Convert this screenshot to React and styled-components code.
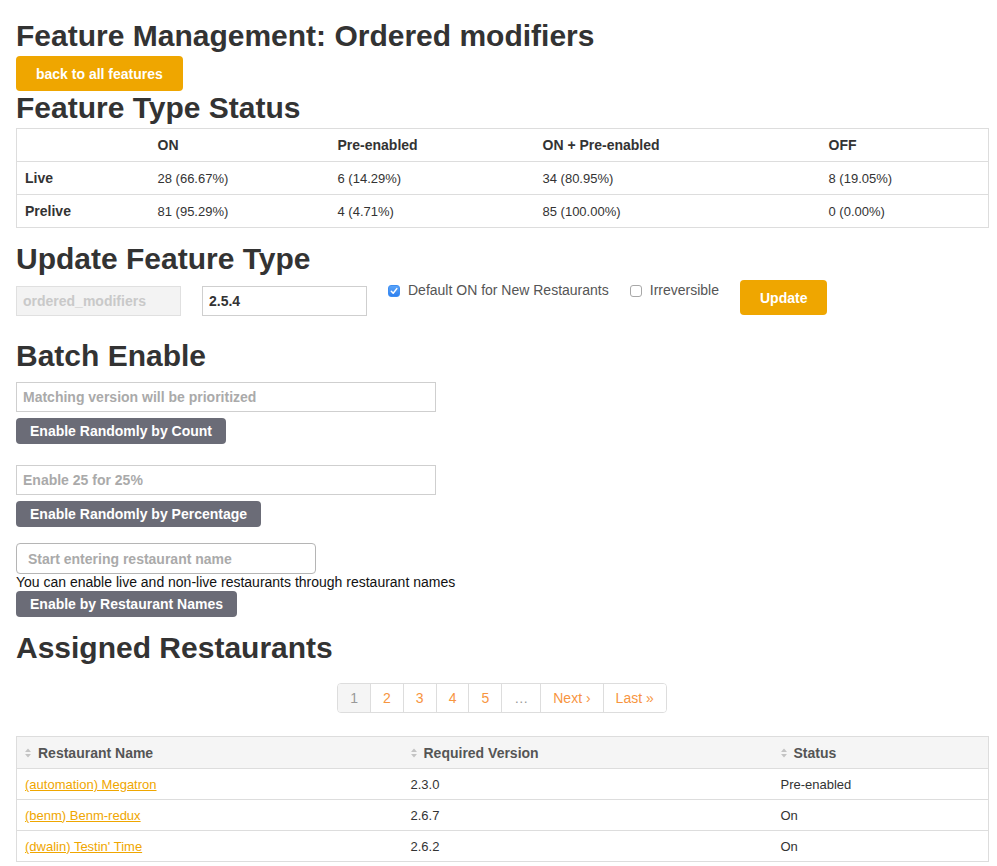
import React from "react";
import styled, { createGlobalStyle } from "styled-components";

const Global = createGlobalStyle`
  html, body { margin: 0; padding: 0; background: #fff; }
  body { font-family: "Liberation Sans", Arial, Helvetica, sans-serif; color: #333; }
  * { box-sizing: border-box; }
`;

const ORANGE = "#efa600";
const SLATE = "#6b6c77";

const Page = styled.div`
  width: 988px;
  padding: 19px 0 0 16px;
`;

const Title = styled.h1`
  margin: 0;
  font-size: 30px;
  line-height: 33px;
  font-weight: bold;
  color: #333;
`;

const Heading = styled.h2`
  margin: ${p => p.$top || 0}px 0 0;
  font-size: 30px;
  line-height: 33px;
  font-weight: bold;
  color: #333;
`;

const PrimaryButton = styled.button`
  display: inline-flex;
  align-items: center;
  justify-content: center;
  height: 35px;
  padding: 0 20px;
  margin-top: ${p => p.$top || 0}px;
  border: none;
  border-radius: 4px;
  background: ${ORANGE};
  color: #fff;
  font-family: inherit;
  font-weight: bold;
  font-size: 14px;
  cursor: pointer;
`;

const SlateButton = styled.button`
  display: flex;
  align-items: center;
  height: 26px;
  padding: 0 14px;
  margin-top: ${p => p.$top || 0}px;
  border: none;
  border-radius: 4px;
  background: ${SLATE};
  color: #fff;
  font-family: inherit;
  font-weight: bold;
  font-size: 14px;
`;

const Table = styled.table`
  width: 972px;
  margin-top: ${p => p.$top || 0}px;
  border-collapse: collapse;
  table-layout: fixed;
  border: 1px solid #ddd;
`;

const HeadRow = styled.tr`
  height: ${p => p.$h}px;
  background: ${p => p.$shade ? "#f5f5f5" : "#fff"};
`;

const Row = styled.tr`
  height: ${p => p.$h}px;
  border-top: 1px solid #ddd;
`;

const Th = styled.th`
  padding: 0 8px;
  text-align: left;
  vertical-align: middle;
  font-size: 14px;
  font-weight: bold;
  color: ${p => p.$muted ? "#555" : "#333"};
  white-space: nowrap;
`;

const Td = styled.td`
  padding: 0 8px;
  text-align: left;
  vertical-align: middle;
  font-size: 13px;
  color: #333;
  white-space: nowrap;
`;

const SortHead = styled.span`
  display: inline-flex;
  align-items: center;
  gap: 7px;
`;

const Link = styled.a`
  color: ${ORANGE};
  text-decoration: underline;
  font-size: 13px;
`;

const FormRow = styled.div`
  display: flex;
  align-items: flex-start;
  gap: 21px;
  margin-top: 5px;
  height: 35px;
`;

const TextInput = styled.input`
  display: block;
  width: ${p => p.$w}px;
  height: ${p => p.$h || 30}px;
  margin-top: ${p => p.$top || 0}px;
  padding: 0 ${p => p.$pad || 6}px;
  border: 1px solid ${p => p.$strong ? "#b5b5b5" : "#cfcfcf"};
  border-radius: ${p => p.$round ? 4 : 0}px;
  background: #fff;
  font-family: inherit;
  font-size: 14px;
  font-weight: bold;
  color: #333;
  outline: none;
  &::placeholder { color: #aaa; }
  &:disabled {
    background: #f3f3f3;
    border-color: #e0e0e0;
    color: #c9c9c9;
  }
`;

const CheckLabel = styled.label`
  display: flex;
  align-items: center;
  gap: 8px;
  margin-top: 2px;
  font-size: 14px;
  line-height: 17px;
  color: #555;
`;

const Box = styled.span`
  display: inline-flex;
  align-items: center;
  justify-content: center;
  width: 12px;
  height: 12px;
  border-radius: 3px;
  border: 1px solid ${p => p.$on ? "#3d8ef3" : "#a8a8a8"};
  background: ${p => p.$on ? "linear-gradient(#5aa3f8, #2f80ef)" : "#fff"};
`;

const Help = styled.div`
  font-size: 14px;
  line-height: 17px;
  color: #111;
`;

const Pager = styled.nav`
  display: flex;
  justify-content: center;
  margin-top: 19px;
`;

const PagerList = styled.div`
  display: inline-flex;
  border: 1px solid #ddd;
  border-radius: 4px;
  overflow: hidden;
`;

const PageItem = styled.span`
  height: 28px;
  line-height: 28px;
  padding: 0 12px;
  font-size: 14px;
  color: ${p => (p.$active || p.$muted) ? "#999" : "#f7953f"};
  background: ${p => p.$active ? "#f5f5f5" : "#fff"};
  & + & { border-left: 1px solid #ddd; }
`;

const SortIcon = () => (
  <svg width="6" height="10" viewBox="0 0 6 10" aria-hidden="true">
    <path d="M0 4 L3 0.5 L6 4 Z" fill="#c4c4c4" />
    <path d="M0 6 L6 6 L3 9.5 Z" fill="#c4c4c4" />
  </svg>
);

const Check = ({ on, children }) => (
  <CheckLabel>
    <Box $on={on}>
      {on && (
        <svg width="8" height="8" viewBox="0 0 8 8">
          <path d="M1.3 4.3 L3.2 6.2 L6.8 1.6" stroke="#fff" strokeWidth="1.5" fill="none" strokeLinecap="round" strokeLinejoin="round" />
        </svg>
      )}
    </Box>
    {children}
  </CheckLabel>
);

const statusCols = [133, 180, 205, 286, 168];
const statusRows = [
  ["Live", "28 (66.67%)", "6 (14.29%)", "34 (80.95%)", "8 (19.05%)"],
  ["Prelive", "81 (95.29%)", "4 (4.71%)", "85 (100.00%)", "0 (0.00%)"],
];

const restCols = [386, 370, 216];
const restaurants = [
  ["(automation) Megatron", "2.3.0", "Pre-enabled"],
  ["(benm) Benm-redux", "2.6.7", "On"],
  ["(dwalin) Testin' Time", "2.6.2", "On"],
];

export default function App() {
  return (
    <>
      <Global />
      <Page>
        <Title>Feature Management: Ordered modifiers</Title>
        <PrimaryButton $top={4}>back to all features</PrimaryButton>
        <Heading>Feature Type Status</Heading>
        <Table $top={4}>
          <colgroup>
            {statusCols.map((w, i) => <col key={i} style={{ width: w }} />)}
          </colgroup>
          <thead>
            <HeadRow $h={33}>
              <Th></Th>
              <Th>ON</Th>
              <Th>Pre-enabled</Th>
              <Th>ON + Pre-enabled</Th>
              <Th>OFF</Th>
            </HeadRow>
          </thead>
          <tbody>
            {statusRows.map(r => (
              <Row key={r[0]} $h={33}>
                <Th>{r[0]}</Th>
                {r.slice(1).map((c, i) => <Td key={i}>{c}</Td>)}
              </Row>
            ))}
          </tbody>
        </Table>

        <Heading $top={14}>Update Feature Type</Heading>
        <FormRow>
          <TextInput $w={165} $top={6} disabled value="ordered_modifiers" readOnly />
          <TextInput $w={165} $top={6} defaultValue="2.5.4" />
          <Check on>Default ON for New Restaurants</Check>
          <Check>Irreversible</Check>
          <PrimaryButton>Update</PrimaryButton>
        </FormRow>

        <Heading $top={24}>Batch Enable</Heading>
        <TextInput $w={420} $top={10} placeholder="Matching version will be prioritized" />
        <SlateButton $top={6}>Enable Randomly by Count</SlateButton>
        <TextInput $w={420} $top={21} placeholder="Enable 25 for 25%" />
        <SlateButton $top={6}>Enable Randomly by Percentage</SlateButton>
        <TextInput $w={300} $h={31} $top={16} $pad={11} $round $strong placeholder="Start entering restaurant name" />
        <Help>You can enable live and non-live restaurants through restaurant names</Help>
        <SlateButton>Enable by Restaurant Names</SlateButton>

        <Heading $top={14}>Assigned Restaurants</Heading>
        <Pager>
          <PagerList>
            <PageItem $active>1</PageItem>
            <PageItem>2</PageItem>
            <PageItem>3</PageItem>
            <PageItem>4</PageItem>
            <PageItem>5</PageItem>
            <PageItem $muted>…</PageItem>
            <PageItem>Next ›</PageItem>
            <PageItem>Last »</PageItem>
          </PagerList>
        </Pager>
        <Table $top={23}>
          <colgroup>
            {restCols.map((w, i) => <col key={i} style={{ width: w }} />)}
          </colgroup>
          <thead>
            <HeadRow $h={32} $shade>
              <Th $muted><SortHead><SortIcon />Restaurant Name</SortHead></Th>
              <Th $muted><SortHead><SortIcon />Required Version</SortHead></Th>
              <Th $muted><SortHead><SortIcon />Status</SortHead></Th>
            </HeadRow>
          </thead>
          <tbody>
            {restaurants.map(r => (
              <Row key={r[0]} $h={31}>
                <Td><Link href="#">{r[0]}</Link></Td>
                <Td>{r[1]}</Td>
                <Td>{r[2]}</Td>
              </Row>
            ))}
          </tbody>
        </Table>
      </Page>
    </>
  );
}
